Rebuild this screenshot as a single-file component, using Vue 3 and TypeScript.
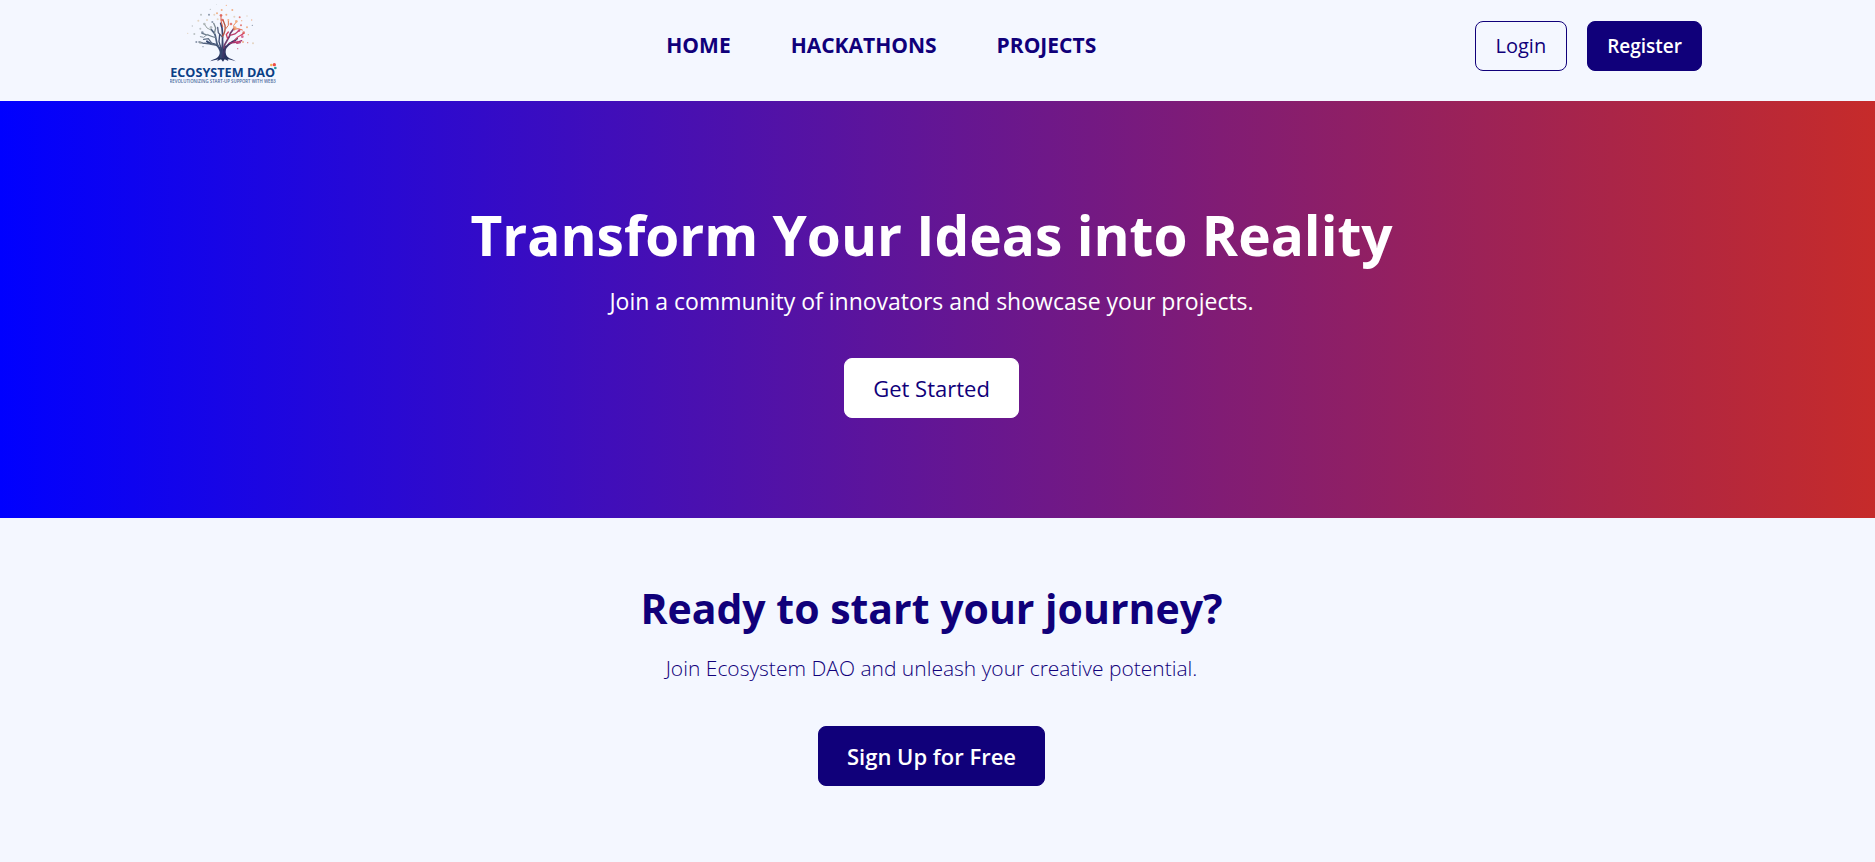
<script setup lang="ts">
interface Dot {
  x: number
  y: number
  r: number
  c: string
}

interface Branch {
  d: string
  w: number
  c: string
}

const links: { label: string; href: string }[] = [
  { label: 'HOME', href: '#home' },
  { label: 'HACKATHONS', href: '#hackathons' },
  { label: 'PROJECTS', href: '#projects' },
]

const branches: Branch[] = [
  { d: 'M197 172 C199 158 197 146 186 136 C176 128 164 134 156 124', w: 6, c: '#33466f' },
  { d: 'M201 172 C202 150 202 130 203 106 L201 84 L197 70', w: 5, c: '#3a4470' },
  { d: 'M205 172 C205 154 208 144 220 134 C230 126 238 124 246 116', w: 6, c: '#3c3566' },
  { d: 'M190 140 C180 124 186 112 178 100 L168 88', w: 5, c: '#4a5c7c' },
  { d: 'M184 134 C168 136 158 128 146 130 L132 126', w: 4, c: '#52627e' },
  { d: 'M182 112 C170 112 164 104 152 104 L142 100', w: 4, c: '#687888' },
  { d: 'M172 132 L160 116 L146 118', w: 4, c: '#5c6c84' },
  { d: 'M178 100 L182 84 L176 70', w: 4, c: '#7d8a92' },
  { d: 'M168 90 L156 84 L148 72', w: 3, c: '#98a3a2' },
  { d: 'M156 104 L146 112 L136 110', w: 3, c: '#8793a0' },
  { d: 'M203 112 L190 98 L188 82', w: 4, c: '#58617e' },
  { d: 'M198 146 L192 124 L194 104', w: 4, c: '#3c4a72' },
  { d: 'M203 108 C210 98 212 90 210 76 L204 60', w: 4, c: '#b5523f' },
  { d: 'M203 80 L198 62 L198 46', w: 3, c: '#d8604c' },
  { d: 'M211 88 L220 76 L220 64', w: 3, c: '#df7650' },
  { d: 'M206 144 C210 124 224 116 226 100 L236 86', w: 5, c: '#713b6d' },
  { d: 'M225 106 L240 102 L254 90', w: 4, c: '#ba3d6b' },
  { d: 'M222 130 C236 126 246 130 260 122', w: 4, c: '#a52e68' },
  { d: 'M242 118 C250 106 258 108 266 100', w: 4, c: '#d2486c' },
  { d: 'M238 90 L236 76 L244 66', w: 3, c: '#ef8a58' },
  { d: 'M236 88 L250 86 L262 90', w: 3, c: '#e8704e' },
  { d: 'M236 122 L246 130 L256 128', w: 4, c: '#b03a70' },
  { d: 'M218 116 L214 104 L220 96', w: 4, c: '#cf3c60' },
]

const palette = {
  grey: '#a5adae',
  sand: '#ddc8ac',
  slate: '#65758c',
  orange: '#ef9a63',
  red: '#dc5147',
  pink: '#cc3c71',
}

const dots: Dot[] = [
  { x: 98, y: 100, r: 2, c: palette.sand },
  { x: 112, y: 78, r: 2, c: palette.grey },
  { x: 118, y: 102, r: 3, c: palette.grey },
  { x: 124, y: 126, r: 3, c: palette.slate },
  { x: 130, y: 62, r: 3, c: palette.sand },
  { x: 138, y: 44, r: 3, c: palette.grey },
  { x: 136, y: 86, r: 3, c: palette.grey },
  { x: 142, y: 98, r: 4, c: palette.slate },
  { x: 136, y: 128, r: 4, c: palette.grey },
  { x: 144, y: 140, r: 2, c: palette.slate },
  { x: 148, y: 72, r: 4, c: palette.grey },
  { x: 156, y: 60, r: 3, c: palette.sand },
  { x: 162, y: 44, r: 3, c: palette.slate },
  { x: 166, y: 28, r: 2, c: palette.grey },
  { x: 168, y: 82, r: 4, c: palette.grey },
  { x: 172, y: 66, r: 3, c: palette.slate },
  { x: 178, y: 44, r: 3, c: palette.sand },
  { x: 186, y: 40, r: 3, c: palette.orange },
  { x: 188, y: 58, r: 3, c: palette.sand },
  { x: 184, y: 14, r: 1, c: palette.grey },
  { x: 198, y: 46, r: 4, c: palette.red },
  { x: 202, y: 60, r: 4, c: palette.red },
  { x: 200, y: 30, r: 3, c: palette.orange },
  { x: 214, y: 16, r: 2, c: palette.orange },
  { x: 214, y: 44, r: 3, c: palette.orange },
  { x: 220, y: 60, r: 3, c: palette.orange },
  { x: 228, y: 72, r: 4, c: palette.red },
  { x: 232, y: 30, r: 3, c: palette.orange },
  { x: 238, y: 50, r: 3, c: palette.sand },
  { x: 244, y: 64, r: 4, c: palette.orange },
  { x: 240, y: 84, r: 5, c: palette.orange },
  { x: 254, y: 52, r: 3, c: palette.red },
  { x: 258, y: 76, r: 3, c: palette.red },
  { x: 252, y: 92, r: 4, c: palette.pink },
  { x: 260, y: 62, r: 2, c: palette.orange },
  { x: 266, y: 98, r: 4, c: palette.red },
  { x: 262, y: 110, r: 4, c: palette.pink },
  { x: 248, y: 126, r: 4, c: palette.pink },
  { x: 264, y: 126, r: 3, c: palette.orange },
  { x: 276, y: 82, r: 3, c: palette.orange },
  { x: 280, y: 104, r: 2, c: palette.orange },
  { x: 278, y: 128, r: 2, c: palette.red },
  { x: 292, y: 76, r: 2, c: palette.slate },
  { x: 290, y: 60, r: 2, c: palette.orange },
  { x: 294, y: 130, r: 3, c: palette.sand },
  { x: 248, y: 146, r: 2, c: palette.pink },
  { x: 276, y: 48, r: 2, c: palette.sand },
]
</script>

<template>
  <div class="page">
    <header class="topbar">
      <a class="brand" href="#home" aria-label="Ecosystem DAO">
        <svg class="logo" viewBox="45 0 324 270" role="img" aria-hidden="true">
          <path
            d="M194 132 C198 150 196 164 188 172 C182 178 172 178 166 184 C178 180 184 180 190 178 L186 184 L198 178 L204 185 L209 178 L220 183 L218 178 C226 179 232 180 242 184 C234 177 224 177 218 171 C211 164 210 150 214 134 L206 144 L203 104 L200 144 Z"
            fill="#26335f"
          />
          <path
            v-for="(b, i) in branches"
            :key="'b' + i"
            :d="b.d"
            :stroke="b.c"
            :stroke-width="b.w"
            fill="none"
            stroke-linecap="round"
          />
          <circle v-for="(p, i) in dots" :key="'p' + i" :cx="p.x" :cy="p.y" :r="p.r" :fill="p.c" opacity="0.75" />
          <text class="wordmark" x="203" y="231" text-anchor="middle">ECOSYSTEM DAO</text>
          <text class="tagline" x="203" y="249" text-anchor="middle">REVOLUTIONIZING START-UP SUPPORT WITH WEB3</text>
          <circle cx="358" cy="194" r="5" fill="#ee4b46" />
          <circle cx="349" cy="195" r="4" fill="#f4b25c" />
          <circle cx="361" cy="204" r="4" fill="#2a9a9c" />
        </svg>
      </a>
      <nav class="menu" aria-label="Main">
        <a v-for="l in links" :key="l.label" :href="l.href">{{ l.label }}</a>
      </nav>
      <div class="account">
        <button type="button" class="btn outline">Login</button>
        <button type="button" class="btn solid">Register</button>
      </div>
    </header>

    <main>
      <section class="hero">
        <h1>Transform Your Ideas into Reality</h1>
        <p>Join a community of innovators and showcase your projects.</p>
        <button type="button" class="btn light large">Get Started</button>
      </section>

      <section class="cta">
        <h2>Ready to start your journey?</h2>
        <p>Join Ecosystem DAO and unleash your creative potential.</p>
        <button type="button" class="btn solid large">Sign Up for Free</button>
      </section>
    </main>
  </div>
</template>

<style>
body {
  margin: 0;
  background: #f4f7ff;
}
</style>

<style scoped>
.page {
  min-height: 100vh;
  background: #f4f7ff;
  color: #10007a;
  font-family: 'Segoe UI', 'Open Sans', 'Noto Sans', sans-serif;
}

.topbar {
  display: flex;
  align-items: flex-start;
  justify-content: space-between;
  box-sizing: border-box;
  min-height: 101px;
  padding: 0 173px 0 170px;
}

.brand {
  display: block;
  width: 118px;
}

.logo {
  display: block;
  width: 108px;
  height: 90px;
}

.wordmark {
  font-family: 'Open Sans', sans-serif;
  font-size: 38px;
  font-weight: 700;
  fill: #0b3f86;
}

.tagline {
  font-family: 'Open Sans', sans-serif;
  font-size: 13px;
  font-weight: 600;
  fill: #4a6a9c;
}

.menu {
  display: flex;
  gap: 60px;
  padding-top: 30px;
}

.menu a {
  color: inherit;
  font-size: 21px;
  font-weight: 700;
  line-height: 30px;
  text-decoration: none;
}

.account {
  display: flex;
  gap: 20px;
  padding-top: 21px;
}

.btn {
  height: 50px;
  padding: 0 20px;
  border: 1px solid #10007a;
  border-radius: 8px;
  font-family: inherit;
  font-size: 19px;
  font-weight: 600;
  line-height: 28px;
  cursor: pointer;
}

.outline {
  background: transparent;
  color: #10007a;
  font-size: 20px;
  font-weight: 500;
}

.solid {
  padding: 0 19px;
  background: #10007a;
  color: #fff;
}

.light {
  border-color: #fff;
  background: #fff;
  color: #10007a;
  font-weight: 500;
}

.large {
  height: 60px;
  padding: 0 28px;
  font-size: 22px;
}

.hero,
.cta {
  display: flex;
  flex-direction: column;
  align-items: center;
  padding-right: 12px;
  text-align: center;
}

.hero {
  padding-top: 100px;
  padding-bottom: 100px;
  background: linear-gradient(90deg, #0000ff, #c62b2a);
  color: #fff;
}

.cta {
  padding-top: 60px;
  padding-bottom: 60px;
}

h1,
h2,
p {
  margin: 0;
}

h1 {
  font-size: 55px;
  font-weight: 700;
  line-height: 68px;
}

.hero p {
  margin: 14px 0 39px;
  font-size: 23px;
  line-height: 36px;
}

h2 {
  font-size: 41px;
  font-weight: 700;
  line-height: 60px;
}

.cta p {
  margin: 12px 0 40px;
  font-size: 21px;
  font-weight: 300;
  line-height: 36px;
}
</style>
